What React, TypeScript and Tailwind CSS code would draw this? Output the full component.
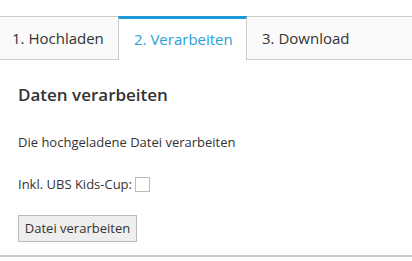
export default function App() {
  return (
    <div className="w-[412px] h-[261px] bg-white text-[#333] font-['Open_Sans',sans-serif] overflow-hidden">
      <div className="pt-[16px] flex">
        <div className="w-[118px] h-[44px] bg-[#fafafa] border-t border-b border-[#ccc] flex items-center pl-[12px] text-[15px] text-[#333]">
          1. Hochladen
        </div>
        <div className="w-[129px] h-[44px] bg-white border-t-[3px] border-t-[#1e9ad6] border-l border-r border-[#ccc] flex items-center pl-[15px] pb-[1px] text-[15px] text-[#2a9fd6]">
          2. Verarbeiten
        </div>
        <div className="flex-1 h-[44px] bg-[#fafafa] border-t border-b border-[#ccc] flex items-center pl-[15px] text-[15px] text-[#333]">
          3. Download
        </div>
      </div>
      <div className="px-[18px]">
        <div className="mt-[23px] text-[17px] font-semibold leading-[24px]">Daten verarbeiten</div>
        <div className="mt-[26px] text-[13px] leading-[18px]">Die hochgeladene Datei verarbeiten</div>
        <div className="mt-[24px] flex items-center text-[13px] leading-[18px]">
          <span>Inkl. UBS Kids-Cup:</span>
          <span className="ml-[3px] w-[15px] h-[15px] border border-[#bbb] bg-white inline-block"></span>
        </div>
        <button className="mt-[22px] w-[119px] h-[27px] bg-[#eee] border border-[#bbb] text-[13px] text-[#333] flex items-center justify-center">
          Datei verarbeiten
        </button>
      </div>
      <div className="mt-[13px] h-[2px] bg-[#ccc]"></div>
    </div>
  );
}
